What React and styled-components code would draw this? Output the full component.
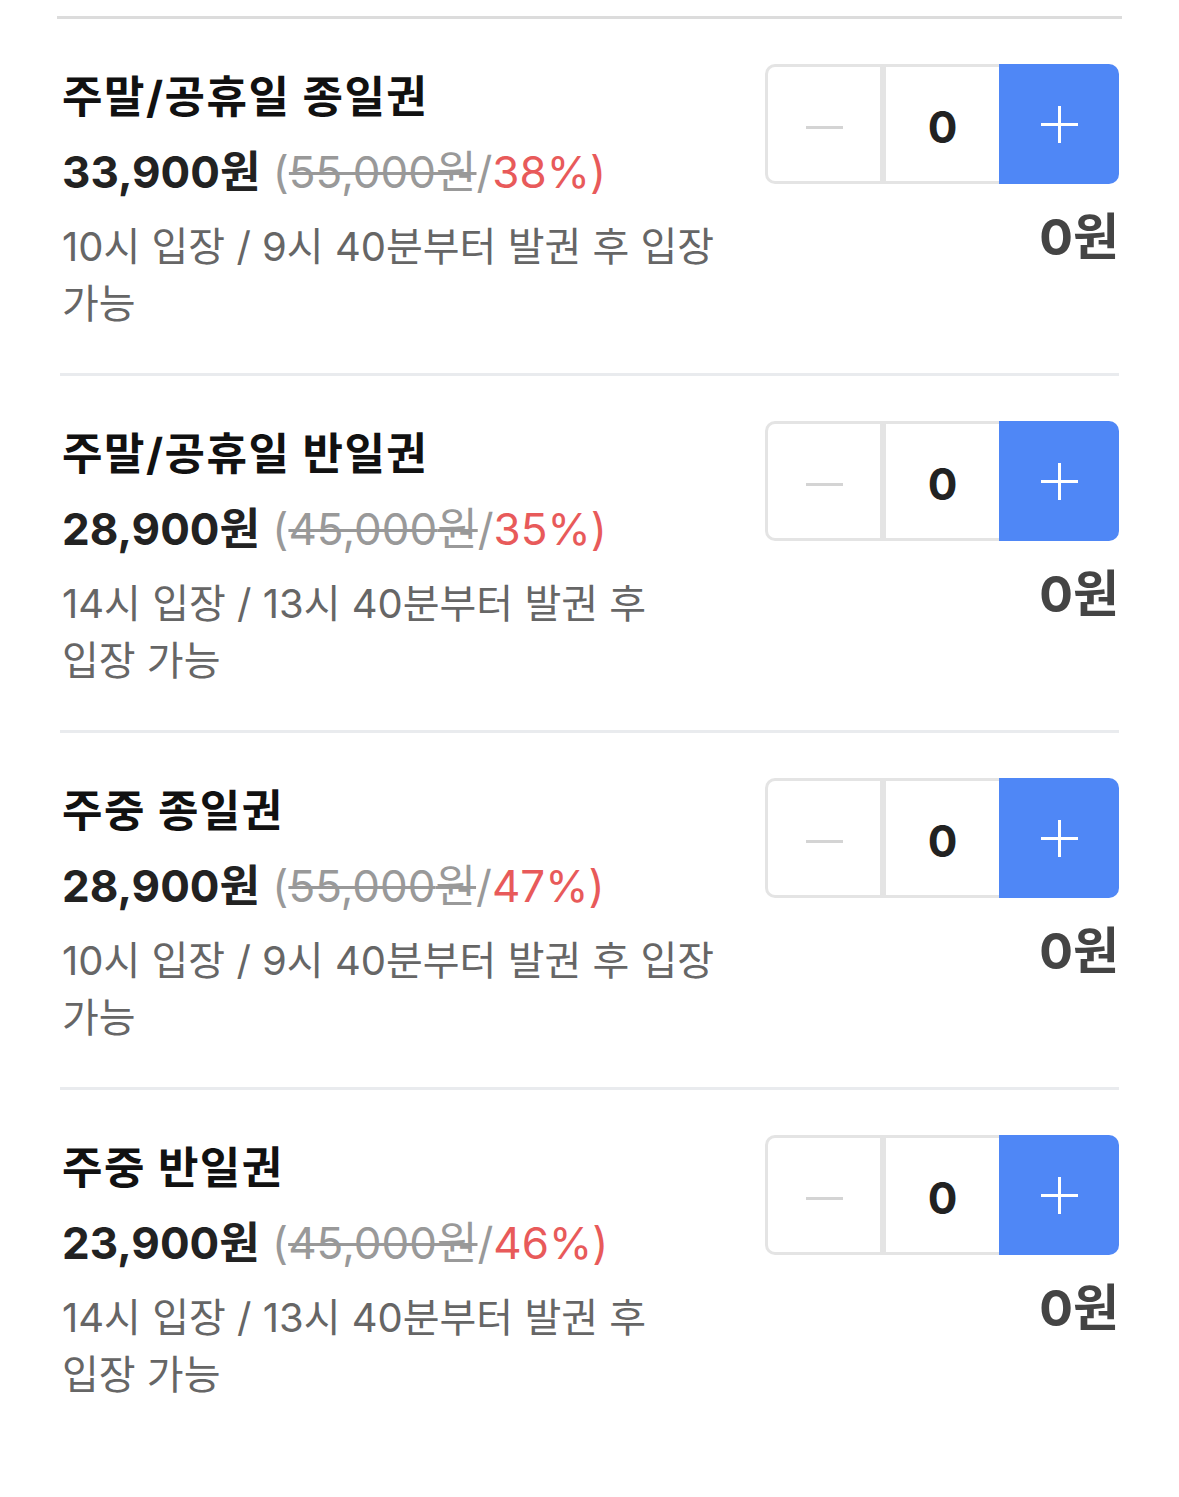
import React from 'react';
import styled, {createGlobalStyle} from 'styled-components';

const GlobalStyle = createGlobalStyle`
  html, body {
    margin: 0;
    padding: 0;
    background: #fff;
  }
  body {
    font-family: "Inter", "Noto Sans CJK KR", sans-serif;
    color: #222;
  }
`;

const Page = styled.div`
  width: 1179px;
  padding-top: 16px;
`;

const TopLine = styled.div`
  margin: 0 57px;
  height: 3px;
  background: #dcdcdc;
`;

const List = styled.div`
  margin: 0 60px;
`;

const Item = styled.div`
  display: grid;
  grid-template-columns: 1fr 354px;
  column-gap: 20px;
  padding: 45px 0 41px 2px;
  border-bottom: ${p => (p.last ? 'none' : '3px solid #e9ebee')};
`;

const Info = styled.div`
  padding-top: 5px;
  min-width: 0;
`;

const Title = styled.div`
  font-size: 44px;
  font-weight: 700;
  line-height: 56px;
  color: #111;
  letter-spacing: 1.5px;
`;

const PriceRow = styled.div`
  margin-top: 19px;
  font-size: 44px;
  line-height: 56px;
  white-space: nowrap;
`;

const Sale = styled.span`
  font-weight: 700;
  color: #222;
`;

const Origin = styled.span`
  color: #999;
  font-weight: 400;
`;

const Strike = styled.span`
  text-decoration: line-through;
  text-decoration-thickness: 3px;
`;

const Rate = styled.span`
  color: #e85a5a;
  font-weight: 400;
`;

const Desc = styled.div`
  margin-top: 18px;
  font-size: 40px;
  line-height: 57px;
  color: #666;
  word-break: keep-all;
  max-width: 660px;
`;

const Side = styled.div`
  display: flex;
  flex-direction: column;
  align-items: flex-end;
`;

const Stepper = styled.div`
  display: flex;
  width: 354px;
  height: 120px;
`;

const Cell = styled.div`
  box-sizing: border-box;
  width: ${p => p.w}px;
  height: 120px;
  padding-top: 6px;
  display: flex;
  align-items: center;
  justify-content: center;
  border: 3px solid #e4e4e4;
  border-right: ${p => (p.first ? '3px solid #e4e4e4' : 'none')};
  border-radius: ${p => (p.first ? '10px 0 0 10px' : '0')};
  font-size: 44px;
  font-weight: 700;
  color: #222;
`;

const PlusButton = styled.button`
  width: 120px;
  height: 120px;
  border: none;
  padding: 0;
  background: #4f87f6;
  border-radius: 0 10px 10px 0;
  display: flex;
  align-items: center;
  justify-content: center;
  cursor: pointer;
`;

const Bar = styled.span`
  position: relative;
  display: block;
  width: 37px;
  height: 3px;
  background: ${p => p.color};

  &::after {
    content: '';
    display: ${p => (p.cross ? 'block' : 'none')};
    position: absolute;
    left: 17px;
    top: -17px;
    width: 3px;
    height: 37px;
    background: ${p => p.color};
  }
`;

const Total = styled.div`
  margin-top: 23px;
  font-size: 50px;
  line-height: 60px;
  font-weight: 700;
  color: #444;
`;

const tickets = [
  {name: '주말/공휴일 종일권', price: '33,900', origin: '55,000', rate: '38', desc: '10시 입장 / 9시 40분부터 발권 후 입장 가능'},
  {name: '주말/공휴일 반일권', price: '28,900', origin: '45,000', rate: '35', desc: '14시 입장 / 13시 40분부터 발권 후 입장 가능'},
  {name: '주중 종일권', price: '28,900', origin: '55,000', rate: '47', desc: '10시 입장 / 9시 40분부터 발권 후 입장 가능'},
  {name: '주중 반일권', price: '23,900', origin: '45,000', rate: '46', desc: '14시 입장 / 13시 40분부터 발권 후 입장 가능'},
];

export default function App() {
  return (
    <Page>
      <GlobalStyle/>
      <TopLine/>
      <List>
        {tickets.map((t, i) => (
          <Item key={i} last={i === tickets.length - 1}>
            <Info>
              <Title>{t.name}</Title>
              <PriceRow>
                <Sale>{t.price}원</Sale>{' '}
                <Origin>(<Strike>{t.origin}원</Strike>/</Origin>
                <Rate>{t.rate}%)</Rate>
              </PriceRow>
              <Desc>{t.desc}</Desc>
            </Info>
            <Side>
              <Stepper>
                <Cell w={118} first><Bar color="#d4d4d4"/></Cell>
                <Cell w={116}>0</Cell>
                <PlusButton aria-label="plus"><Bar color="#fff" cross/></PlusButton>
              </Stepper>
              <Total>0원</Total>
            </Side>
          </Item>
        ))}
      </List>
    </Page>
  );
}
